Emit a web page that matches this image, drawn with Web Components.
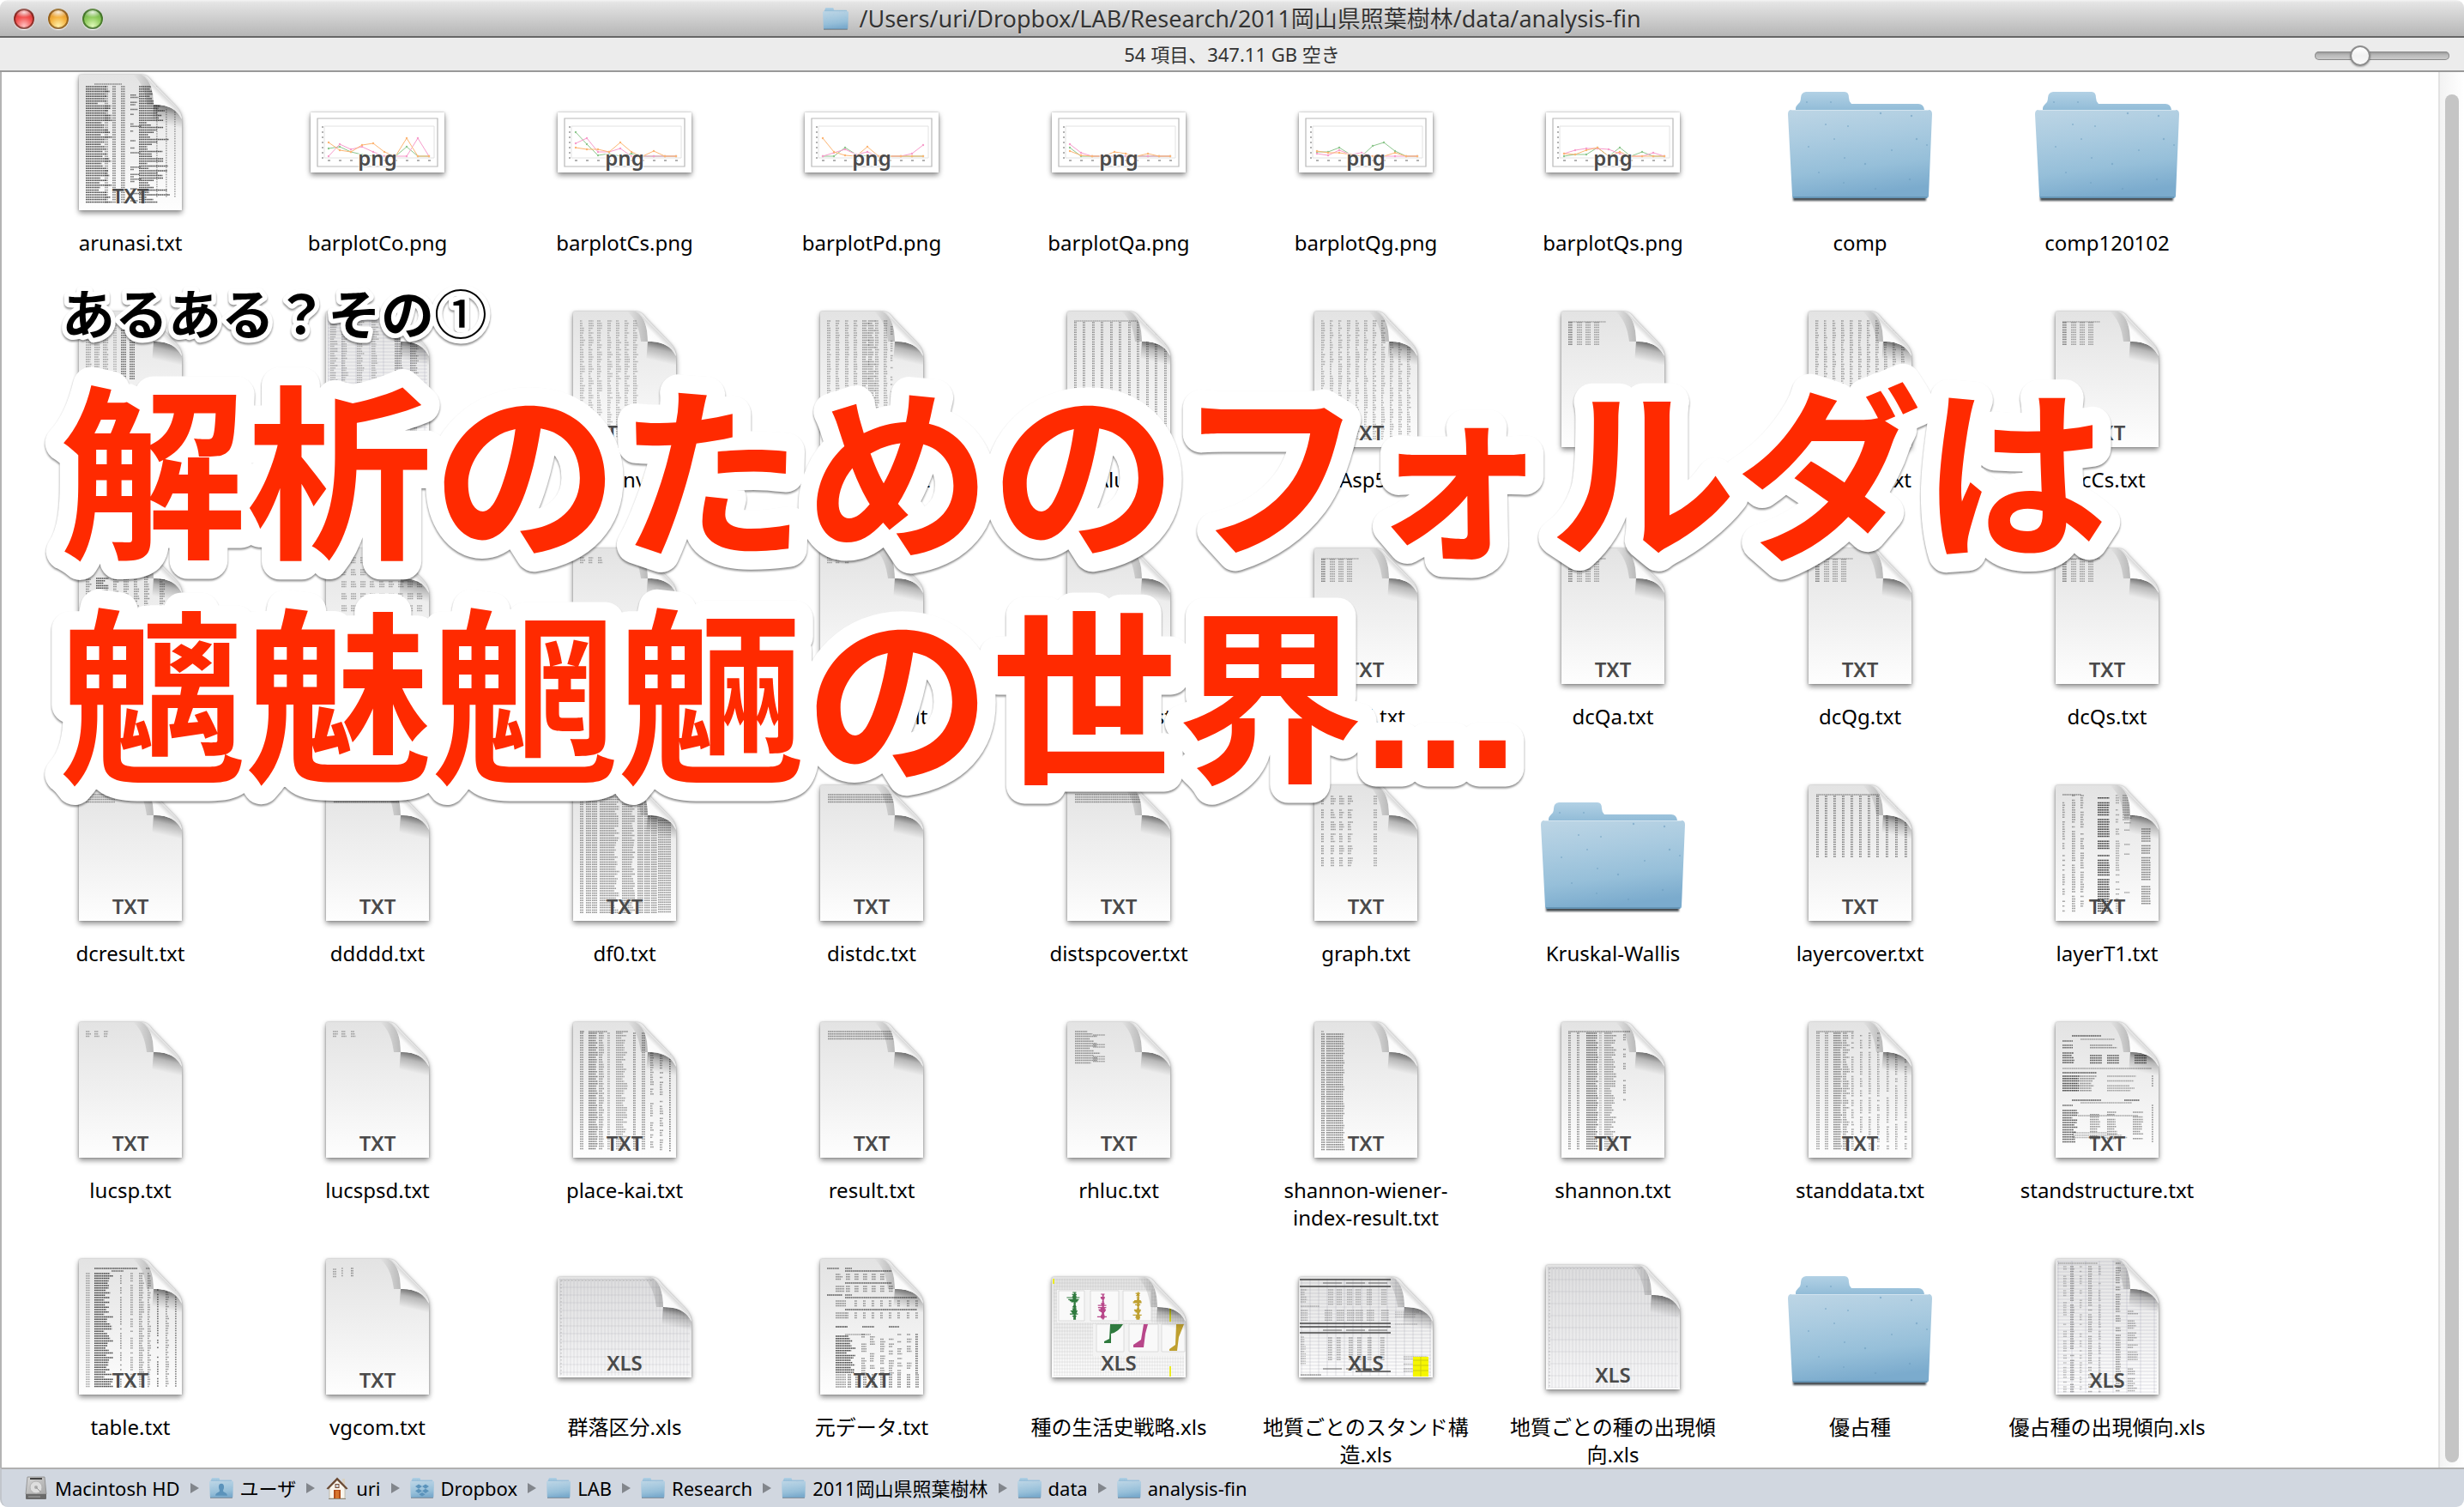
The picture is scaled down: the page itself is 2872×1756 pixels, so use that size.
<!DOCTYPE html>
<html lang="ja">
<head>
<meta charset="utf-8">
<title>analysis-fin</title>
<style>
html,body{margin:0;height:100%;background:#fff}
body{font-family:"Noto Sans","Noto Sans CJK JP",sans-serif;color:#000;overflow:hidden}
</style>
</head>
<body>
<finder-window>
  <title-bar slot="title">/Users/uri/Dropbox/LAB/Research/2011岡山県照葉樹林/data/analysis-fin</title-bar>
  <status-bar slot="status">54 項目、347.11 GB 空き</status-bar>
  <file-grid>
    <file-item art="arunasi">arunasi.txt</file-item>
    <file-item kind="png" art="Co">barplotCo.png</file-item>
    <file-item kind="png" art="Cs">barplotCs.png</file-item>
    <file-item kind="png" art="Pd">barplotPd.png</file-item>
    <file-item kind="png" art="Qa">barplotQa.png</file-item>
    <file-item kind="png" art="Qg">barplotQg.png</file-item>
    <file-item kind="png" art="Qs">barplotQs.png</file-item>
    <file-item kind="folder">comp</file-item>
    <file-item kind="folder">comp120102</file-item>

    <file-item art="half">basal.txt</file-item>
    <file-item art="ruled">CCAdata.txt</file-item>
    <file-item art="env">CCAenv.txt</file-item>
    <file-item art="env2">CCAenv2.txt</file-item>
    <file-item art="luc">CCAluc.txt</file-item>
    <file-item art="sp5">CCAsp5.txt</file-item>
    <file-item art="dc">dc.txt</file-item>
    <file-item art="cover">dccover.txt</file-item>
    <file-item art="dc">dcCs.txt</file-item>

    <file-item art="mixed">dcdata.txt</file-item>
    <file-item art="groups">dcenv.txt</file-item>
    <file-item art="tiny">dcluc.txt</file-item>
    <file-item art="tiny">dclayer2-result.txt</file-item>
    <file-item art="blank">dclucspsd-dist.txt</file-item>
    <file-item art="dc">dcPd.txt</file-item>
    <file-item art="dc">dcQa.txt</file-item>
    <file-item art="dc">dcQg.txt</file-item>
    <file-item art="dc">dcQs.txt</file-item>

    <file-item art="head1">dcresult.txt</file-item>
    <file-item art="head2">ddddd.txt</file-item>
    <file-item art="df0">df0.txt</file-item>
    <file-item art="head2">distdc.txt</file-item>
    <file-item art="head2">distspcover.txt</file-item>
    <file-item art="graph">graph.txt</file-item>
    <file-item kind="folder">Kruskal-Wallis</file-item>
    <file-item art="layercover">layercover.txt</file-item>
    <file-item art="layerT1">layerT1.txt</file-item>

    <file-item art="tiny">lucsp.txt</file-item>
    <file-item art="tiny">lucspsd.txt</file-item>
    <file-item art="place">place-kai.txt</file-item>
    <file-item art="head2">result.txt</file-item>
    <file-item art="rhluc">rhluc.txt</file-item>
    <file-item art="wiener">shannon-wiener-index-result.txt</file-item>
    <file-item art="shannon">shannon.txt</file-item>
    <file-item art="stand">standdata.txt</file-item>
    <file-item art="structure">standstructure.txt</file-item>

    <file-item art="table">table.txt</file-item>
    <file-item art="vgcom">vgcom.txt</file-item>
    <file-item kind="xls" size="156x117" art="sheet">群落区分.xls</file-item>
    <file-item art="moto">元データ.txt</file-item>
    <file-item kind="xls" size="156x117" art="charts">種の生活史戦略.xls</file-item>
    <file-item kind="xls" size="156x117" art="report">地質ごとのスタンド構造.xls</file-item>
    <file-item kind="xls" size="156x145" art="sheet">地質ごとの種の出現傾向.xls</file-item>
    <file-item kind="folder">優占種</file-item>
    <file-item kind="xls" art="trend">優占種の出現傾向.xls</file-item>
  </file-grid>
  <path-bar slot="path">
    <path-item icon="disk">Macintosh HD</path-item>
    <path-item icon="users">ユーザ</path-item>
    <path-item icon="home">uri</path-item>
    <path-item icon="dropbox">Dropbox</path-item>
    <path-item icon="folder">LAB</path-item>
    <path-item icon="folder">Research</path-item>
    <path-item icon="folder">2011岡山県照葉樹林</path-item>
    <path-item icon="folder">data</path-item>
    <path-item icon="folder" last>analysis-fin</path-item>
  </path-bar>
  <caption-overlay slot="overlay"></caption-overlay>
</finder-window>

<script>
const define=(name,html)=>customElements.define(name,class extends HTMLElement{
  connectedCallback(){
    if(this.shadowRoot)return;
    const root=this.attachShadow({mode:'open'});
    root.innerHTML=typeof html==='function'?html(this):html;
  }
});

/* ---------- folder artwork ---------- */
const folder=(extra='')=>`
<defs>
 <linearGradient id="back" x1="0" y1="0" x2="0" y2="1"><stop offset="0" stop-color="#b2d1e5"/><stop offset=".8" stop-color="#8fbad6"/><stop offset="1" stop-color="#6fa5c8"/></linearGradient>
 <linearGradient id="front" x1=".1" y1="0" x2=".3" y2="1"><stop offset="0" stop-color="#bcd5e5"/><stop offset=".35" stop-color="#aacbe0"/><stop offset=".7" stop-color="#96bfd9"/><stop offset="1" stop-color="#7babcd"/></linearGradient>
 <filter id="soft" x="-10%" y="-200%" width="120%" height="500%"><feGaussianBlur stdDeviation="1"/></filter>
</defs>
<rect x="6" y="121" width="155" height="6" fill="#333a40" fill-opacity=".9" filter="url(#soft)"/>
<path d="M9 26V19q0-2 3-5 3-2 3-7 0-6 6-7H66q5 0 5 7 0 4 3 7h78q6 0 7 7v8z" fill="url(#back)"/>
<path d="M4 21H164q4 0 4 5l-4 95q0 3-3 3H8q-3 0-3-3L0 26q0-5 4-5z" fill="url(#front)"/>
<path d="M4 21.500H164" stroke="#d3e4ef" stroke-width="1"/>
<path d="M6 123H162" stroke="#6595b6" stroke-width="2"/>
<g fill="#6f9fc1" opacity=".6"><circle cx="44" cy="38" r="1"/><circle cx="108" cy="25" r="1.200"/><circle cx="144" cy="28" r="1.200"/><circle cx="150" cy="55" r="1.200"/><circle cx="24" cy="64" r="1"/><circle cx="90" cy="84" r="1.200"/><circle cx="66" cy="77" r="1"/><circle cx="36" cy="94" r="1"/><circle cx="142" cy="102" r="1.200"/><circle cx="102" cy="113" r="1.200"/><circle cx="65" cy="106" r="1"/><circle cx="70" cy="40" r="1"/><circle cx="121" cy="68" r="1"/><circle cx="54" cy="55" r="1"/><circle cx="162" cy="62" r="1"/><circle cx="22" cy="12" r="1"/><circle cx="50" cy="12" r="1"/></g>${extra}`;

/* ---------- text thumbnails: [x, y, width, height, opacity, raggedness, fill chance] ---------- */
const cols=(xs,y,h,w,op=.45,j=0,p=1)=>xs.map(x=>[x,y,w,h,op,j,p]);
const ART={
 blank:[],
 arunasi:[[18,10,32,2,.5],[8,13,32,138,.85,.6],[30,13,4,138,.5],[39,13,4,138,.6],[49,13,5,138,.6],[60,20,14,128,.7,.8,.35],[70,13,36,138,.85,.75],[90,40,2,104,.4],[101,40,2,104,.4],[111,40,2,104,.4]],
 half:[...cols([8,18,28],10,70,7,.4,.3),...cols([40],10,70,4,.3),...cols([49,59],10,70,6,.7)],
 ruled:[...cols([5,18,36,53],6,144,9,.35,.5),...cols([80,98],20,130,10,.5,.3)],
 env:cols([8,18,28,40,50,60,70],10,138,6,.35,.6),
 env2:[...cols([8,18,29,39,64,74],10,138,5,.4,.4),...cols([49,56],10,138,9,.45,.5),[82,14,3,134,.4,.2,.5]],
 luc:[[8,10,76,2,.35],...cols([8,18,29,39,50,60,71,81,92,102,113],12,138,3,.5)],
 sp5:cols([8,18,28,38,48,58,68,78,88,98,108],10,140,5,.38,.6),
 cover:cols([8,18,28,38,48,58,68,78,88,98,108],10,140,4,.45,.4),
 dc:[[8,11,44,2,.35],[8,12,5,28,.6],...cols([18,28,38],12,28,6,.4)],
 mixed:[...cols([8,40,52,64,76,94],10,138,7,.5,.6),[20,34,18,90,.85,.7]],
 groups:[10,24,38,52,66,80,94,108].flatMap(y=>cols([18,29,40,51,62,73,84,95,106],y,9,7,.4,.3)),
 tiny:cols([8,18,29],10,8,6,.4,.3),
 vgcom:[[8,11,4,10,.4],[18,10,1,12,.4],[29,10,3,12,.5]],
 head1:[[8,10,34,10,.45]],
 head2:[[9,10,80,11,.5]],
 df0:[[8,10,4,140,.5],...cols([15,22],10,140,6,.5),[31,10,24,140,.5,.3],[57,10,16,140,.5,.3],...cols([75,83,91],10,140,7,.5),[99,40,15,110,.5]],
 graph:[12,28,42,56,70,84].flatMap(y=>[[8,y,3,11,.5],...cols([19,29,39],y,11,6,.45,.5),[69,y,4,11,.4]]),
 layercover:[[9,10,76,2,.45],...cols([9,19,29,39,49,59,69,79,90,101,112],12,72,3,.6)],
 layerT1:[[8,10,22,2,.5],[8,11,3,138,.5,.2,.8],[19,11,4,138,.5,.2,.8],[29,11,4,138,.5,.3,.8],[49,11,14,138,.95,.05,.85],[70,11,5,138,.4,.5,.8],[78,11,8,30,.4],[100,50,11,96,.6,.1,.8],[80,12,12,138,.4,.5,.1]],
 place:[[8,10,5,2,.6],[18,10,22,2,.5],[50,10,14,2,.5],[8,12,4,138,.5],[18,12,11,138,.65,.25],[30,12,6,138,.5,.3],[40,12,3,138,.4],[50,12,14,138,.45,.6],[70,12,3,138,.55],[80,12,4,138,.5],[90,24,4,126,.5,.4,.7],[101,30,4,120,.5,.3,.8],[112,34,2,116,.6]],
 rhluc:[[9,10,30,38,.5,.6],[30,14,14,34,.4,0,.6]],
 wiener:[[8,10,3,2,.4],[8,13,5,138,.6,.2],[14,13,21,138,.6,.08]],
 shannon:[[8,10,72,2,.5],...cols([8,18],12,138,3,.55),[29,12,14,138,.7,.2],[44,12,3,138,.3],[50,12,14,138,.5,.5],[72,14,3,80,.5,0,.5]],
 stand:[[9,10,44,2,.45],...cols([9,19],12,138,4,.45),[29,12,10,138,.6,.2],[40,12,8,138,.5,.6],...cols([50,60,70,80,91,101,112],12,138,3,.45,.2,.9)],
 structure:[[19,15,34,2,.8],[29,19,40,2,.4],[8,21,12,2,.7],[8,26,12,6,.7],[40,26,32,6,.5,.5],[8,35,20,14,.8,.5],...cols([40,60,92],38,11,14,.8),[8,53,104,2,.4],[8,58,40,2,.8],[8,62,20,18,.9,.1],[28,62,20,18,.5,.4],[60,62,34,18,.4,.3,.7],[112,62,2,14,.5],[19,90,34,2,.8],[80,90,18,2,.8],[29,93,60,2,.4],[8,96,12,2,.7],[8,102,20,38,.8,.5],...cols([40,60,90],104,34,12,.5,.3,.8),[26,108,70,2,.4],[20,128,80,8,.35,.5],[112,96,2,44,.5]],
 table:[[18,10,50,2,.8],[38,13,14,2,.7],[78,10,8,2,.5],[8,16,5,134,.4],[18,16,22,134,.9,.5],[48,16,2,134,.5,0,.7],[60,16,3,134,.45,0,.8],[70,16,6,134,.5,.5],[80,16,4,134,.5,.6],[91,35,2,115,.7,0,.8],[101,35,4,115,.5,.6],[112,35,2,115,.6]],
 moto:[[8,10,14,2,.7],[29,10,8,2,.7],[29,13,54,3,.75],[18,17,8,8,.5,.4],...cols([30,40,50,60,70],17,8,5,.5),[29,27,54,3,.75],[18,31,10,8,.5],...cols([30,40,50,60,70,80],31,8,5,.5),[8,41,18,2,.8],[29,41,8,2,.7],[29,44,84,3,.75],[18,48,12,8,.5],...cols([40,50,60,70,80,90,101,111],48,8,3,.5),[29,58,84,3,.8],[18,62,12,8,.5],...cols([30,40,50,60,70,80,90,101,111],62,8,3,.5),[18,78,14,2,.9],[49,78,14,2,.8],[80,78,12,2,.8],[29,87,30,2,.4],[18,89,24,44,.9,.5],...cols([48,58,70,80,90,101],87,46,6,.5,.3,.6),[111,87,3,46,.7],[18,134,12,16,.5],...cols([32,41,50,60,70,80,90,101,111],134,16,4,.6)],
 trend:[[3,4,46,2,.35],[9,8,4,148,.3,.2,.8],[17,8,5,148,.45,.2,.85],[28,8,3,148,.3,.2,.7],[38,8,5,148,.4,.2,.8],[50,8,3,148,.3,.2,.8],[70,4,6,152,.5,.2,.85],[84,60,12,96,.4,.5,.7],[60,8,50,148,.2,.4,.1]]
};
const rng=s=>()=>(s=(Math.imul(s,1664525)+1013904223)>>>0)/4294967296;
const textBlocks=(spec,seed)=>{
  const rand=rng(seed*7919+17);
  return spec.map(([x,y,w,h,op=.5,j=0,p=1])=>{
    let d='';
    for(let t=y+1;t<=y+h;t+=2.8){
      if(rand()>p)continue;
      const len=Math.max(2,w*(1-j*rand()));
      d+=`M${x} ${t.toFixed(1)}h${len.toFixed(1)}`;
    }
    return `<path d="${d}" stroke="#333" stroke-opacity="${op}" stroke-width="1.500" stroke-dasharray="1.700 .5"/>`;
  }).join('');
};
const gridLines=(w,h,sx,sy,c,op)=>{
  let d='';
  for(let x=3;x<w;x+=sx)d+=`M${x} 2V${h-2}`;
  for(let y=3;y<h;y+=sy)d+=`M2 ${y}H${w-2}`;
  return `<path d="${d}" stroke="${c}" stroke-opacity="${op}" stroke-width=".8"/>`;
};
const zigzag=(x,y0,y1,amp,c,seed)=>{
  const rand=rng(seed*101+3);let d='';
  for(let y=y0;y<y1;y+=1.2){const a=rand()*rand()*amp;d+=`M${(x-a*.7).toFixed(1)} ${y.toFixed(1)}H${(x+1.5+a*.4).toFixed(1)}`}
  return `<path d="${d}" stroke="${c}" stroke-width="1.200"/>`;
};
const sheets={
 sheet:(w,h)=>`<path d="M2 2H${w-2}V${h-2}H2z" fill="#777788" fill-opacity=".05"/>`+gridLines(w,h,4,h>130?14:9,'#8a8a96',.22)+`<path d="M4 4V${h-3}M4 4H${w-44}" stroke="#777" stroke-opacity=".3" stroke-width="1.500" stroke-dasharray="1.500 2.500"/>`,
 charts:(w,h)=>gridLines(w,h,3,4,'#8a8a94',.2)
  +`<path d="M6 15H116V53H6zM48 55H154V92H48z" fill="#f3f3f3"/><g fill="#f9f9f9" stroke="#d4d4d4" stroke-width=".8"><path d="M8 16H38V51H8zM45 16H78V51H45zM83 16H116V51H83zM52 55H84V87H52zM90 55H124V87H90zM128 55H155V87H128z"/></g>`
  +zigzag(26,18,50,13,'#2f7a3e',1)+zigzag(59,20,50,10,'#b8478a',2)+zigzag(100,18,50,10,'#bfa030',3)
  +'<path d="M68 55H83Q78 64 69 66V77H61V75L67 72z" fill="#2f7a3e"/><path d="M107 55H112L109 66 107 82H95V79L104 73z" fill="#b8478a"/><path d="M145 55H154L148 70 146 86H137V84L144 79z" fill="#bfa030"/>'
  +'<path d="M1 2H3V8H1zM137 35H139V52H137zM137 104H139V116H137z" fill="#ecec20"/>',
 report:(w,h)=>gridLines(w,h,10,4,'#8a8a9a',.3)
  +'<path d="M1 3H107M1 11H107M1 54H107M1 58H107M1 65H107M66 110H107" stroke="#444" stroke-width="1.500"/><path d="M28 7H50M55 7H77M81 7H103M28 62H50M55 62H77M81 62H103M28 107H50M55 107H77" stroke="#666" stroke-width="1"/>'
  +textBlocks([[2,14,8,16,.3,.4],...cols([34,44,56,66,79,96],14,18,6,.3),[2,33,22,2,.3],[2,38,8,14,.3],...cols([30,44,56,66,79,96],38,13,9,.33),[2,69,7,32,.3,.4],...cols([34,44,58,68,80,95],70,28,5,.4),[112,40,30,18,.2,.3,.6],[122,92,28,20,.3,.3,.6],[2,113,24,2,.5]],5)
  +'<path d="M133 93H151V116H133z" fill="#f6f600"/><path d="M133 97H151M133 103H151M133 109H151M142 93V116" stroke="#cbcb10" stroke-width="1"/>'
};
let serial=0;
const page=(kind,art,w,h)=>{
  const body=sheets[art]?sheets[art](w,h):(art==='ruled'||art==='trend'?gridLines(w,h,16,4,'#8888a0',.3):'')+textBlocks(ART[art]||[],++serial);
  const f=w-47;
  const outline=`M2 0H${f}C${f+6} 0 ${f+9} 4 ${f+12} 8L${f+40} 37Q${w} 44 ${w} 54V${h}H0V2Q0 0 2 0z`;
  return `<svg class="page" width="${w}" height="${h}" viewBox="0 0 ${w} ${h}" fill="none" aria-hidden="true">
<defs>
 <linearGradient id="paper" x1="0" y1="0" x2="0" y2="1"><stop offset="0" stop-color="#e3e3e3"/><stop offset=".55" stop-color="#f1f1f1"/><stop offset="1" stop-color="#fefefe"/></linearGradient>
 <linearGradient id="curl" gradientUnits="userSpaceOnUse" x1="${f+14}" y1="35" x2="${f+27}" y2="22"><stop offset="0" stop-color="#fff"/><stop offset=".6" stop-color="#fafafa"/><stop offset=".85" stop-color="#dcdcdc"/><stop offset="1" stop-color="#f4f4f4"/></linearGradient>
 <linearGradient id="shade" gradientUnits="userSpaceOnUse" x1="${f+30}" y1="36" x2="${f+25}" y2="58"><stop offset="0" stop-color="#000" stop-opacity=".55"/><stop offset=".4" stop-color="#000" stop-opacity=".22"/><stop offset="1" stop-color="#000" stop-opacity="0"/></linearGradient>
 <linearGradient id="bend" x1="0" y1="0" x2="1" y2="0"><stop offset="0" stop-color="#000" stop-opacity="0"/><stop offset="1" stop-color="#000" stop-opacity=".2"/></linearGradient>
 <clipPath id="cut"><path d="${outline}"/></clipPath>
</defs>
<g class="lift"><path d="${outline}" fill="url(#paper)"/></g>
<g clip-path="url(#cut)">${body}
<path d="M${f-10} 0H${f}C${f+11} 6 ${f+14} 20 ${f+14} 35H${f+6}C${f+4} 20 ${f} 8 ${f-10} 0z" fill="url(#bend)"/>
<path d="M${f+14} 35C${f+28} 35 ${f+40} 38 ${w} 52V68Q${f+36} 56 ${f+12} 60z" fill="url(#shade)"/></g>
<path d="M${f} 0C${f+11} 6 ${f+14} 20 ${f+14} 35C${f+28} 35 ${f+40} 38 ${w} 52Q${f+46} 43 ${f+40} 37L${f+12} 8C${f+9} 4 ${f+6} 0 ${f} 0z" fill="url(#curl)"/>
<text x="${w/2}" y="${h-8}">${kind.toUpperCase()}</text></svg>`;
};

/* ---------- chart thumbnails: three series, ten samples each ---------- */
const SERIES={
 Co:[[42,40,46,49,51,51,51,40,51,51],[51,37,43,40,46,51,51,51,30,51],[35,44,46,38,36,46,51,30,51,51]],
 Cs:[[23,37,50,48,51,48,51,51,51,51],[36,30,46,46,42,51,51,51,51,51],[41,43,43,46,35,46,51,45,51,51]],
 Pd:[[51,51,41,49,51,51,51,51,51,51],[51,47,43,49,46,51,51,51,48,38],[30,46,50,51,40,51,51,51,51,51]],
 Qa:[[41,51,51,51,51,51,51,51,51,51],[37,47,51,51,51,51,51,51,51,51],[45,50,51,51,46,48,51,48,51,51]],
 Qg:[[46,46,41,49,51,39,35,45,51,51],[48,50,44,49,47,51,51,51,51,51],[45,47,47,49,51,51,51,47,51,51]],
 Qs:[[51,49,49,41,51,41,51,46,51,51],[48,44,42,42,43,48,51,51,47,51],[48,49,44,41,51,46,51,51,51,51]]
};
const chart=art=>{
  const line=(ys,c)=>{const p=ys.map((y,i)=>`${21+i*13},${y}`);
    return `<polyline points="${p.join(' ')}" stroke="${c}" stroke-width="1"/>`+ys.map((y,i)=>`<circle cx="${21+i*13}" cy="${y}" r="1.200" fill="${c}"/>`).join('')};
  const [g,p,o]=SERIES[art];let ticks='';
  for(let i=0;i<10;i++)ticks+=`M${20+i*13} 56h3`;
  for(let i=0;i<7;i++)ticks+=`M13 ${17+i*6}h2`;
  return `<svg class="page" width="156" height="70" viewBox="0 0 156 70" fill="none" aria-hidden="true"><g class="lift"><path d="M0 0H156V70H0z" fill="#fff"/></g>
<path d="M8 7H148V63H8z" stroke="#b8b8b8" stroke-width="1.200"/><path d="M16 16H144V53H16z" stroke="#e2e2e2"/><path d="${ticks}" stroke="#999" stroke-width="1.500"/>
${line(g,'#8cc68c')}${line(p,'#f79bcb')}${line(o,'#fcb573')}
<text x="78" y="62" class="halo">png</text></svg>`;
};

define('file-item',el=>{
  const kind=el.getAttribute('kind')||'txt',art=el.getAttribute('art');
  const [w,h]=(el.getAttribute('size')||'120x158').split('x').map(Number);
  const pic=kind==='folder'?`<svg width="168" height="142" viewBox="0 -12 168 142" aria-hidden="true">${folder()}</svg>`
    :kind==='png'?chart(art):page(kind,art,w,h);
  return `<style>
:host{display:flex;flex-direction:column;align-items:center;gap:19px;box-sizing:border-box}
.icon{height:164px;display:flex;align-items:center;justify-content:center}
svg{display:block;overflow:visible}
.lift{filter:drop-shadow(0 3px 3px rgba(0,0,0,.38)) drop-shadow(0 0 1px rgba(0,0,0,.3))}
text{font:600 24px "Noto Sans",sans-serif;fill:#4a4a4a;text-anchor:middle}
.halo{paint-order:stroke;stroke:rgba(255,255,255,.6);stroke-width:3px}
.name{width:248px;text-align:center;font-size:24px;line-height:32px}
</style><div class="icon">${pic}</div><div class="name"><slot></slot></div>`;
});

define('file-grid',`<style>
:host{display:flex;flex:1;min-height:0;background:#fff;border-left:2px solid #b4b4b4;overflow:hidden}
.files{flex:1;display:grid;grid-template-columns:repeat(auto-fill,288px);grid-auto-rows:276px;padding-left:6px;overflow:hidden}
.scroll{flex:none;width:28px;box-sizing:content-box;border-left:2px solid #e2e2e2;background:linear-gradient(90deg,#f3f3f3,#fff);padding:26px 0 6px;display:flex;justify-content:center}
.thumb{width:16px;border-radius:8px;background:#c5c5c5}
</style><div class="files"><slot></slot></div><div class="scroll"><div class="thumb"></div></div>`);

define('title-bar',`<style>
:host{display:grid;grid-template-columns:1fr auto 1fr;align-items:center;height:42px;background:linear-gradient(#f4f4f4,#e4e4e4 3px,#b6b6b6);border-bottom:2px solid #666;border-radius:9px 9px 0 0}
.lights{display:flex;gap:16px;padding:2px 0 0 16px}
button{width:24px;height:24px;padding:0;border-radius:50%;border:2px solid rgba(70,20,10,.55);box-shadow:0 1px 1px #fff}
.c{background:radial-gradient(ellipse 55% 30% at 50% 12%,#ffffffd0,#fff0),radial-gradient(circle at 50% 90%,#ffc0c0,#f2504e 50%,#c22c2c)}
.m{border-color:rgba(110,65,10,.65);background:radial-gradient(ellipse 55% 30% at 50% 12%,#ffffffd0,#fff0),radial-gradient(circle at 50% 90%,#fff0a8,#f4b13e 50%,#cf8222)}
.z{border-color:rgba(40,85,20,.65);background:radial-gradient(ellipse 55% 30% at 50% 12%,#ffffffd0,#fff0),radial-gradient(circle at 50% 90%,#def8b8,#8ecb5c 50%,#5a9a3c)}
.title{display:flex;align-items:center;gap:12px;padding-top:2px;font-size:27px;line-height:36px;color:#333;text-shadow:0 1px 0 rgba(255,255,255,.5)}
svg{display:block}
</style><div class="lights"><button class="c" aria-label="閉じる"></button><button class="m" aria-label="しまう"></button><button class="z" aria-label="拡大"></button></div>
<div class="title"><svg width="30" height="26" viewBox="0 0 168 130" preserveAspectRatio="none" aria-hidden="true">${folder()}</svg><span><slot></slot></span></div>`);

define('status-bar',`<style>
:host{display:grid;grid-template-columns:1fr auto 1fr;align-items:center;height:38px;background:#ececec;border-bottom:2px solid #999;font-size:22px;line-height:30px;color:#333}
.text{grid-column:2}
.size{justify-self:end;display:flex;padding-right:17px}
input{appearance:none;-webkit-appearance:none;width:157px;height:26px;margin:3px 0 0;background:none}
input::-webkit-slider-runnable-track{height:10px;border-radius:5px;background:linear-gradient(#8e8e8e,#b8b8b8 40%,#cfcfcf);box-shadow:inset 0 0 0 1px #8a8a8a}
input::-webkit-slider-thumb{-webkit-appearance:none;width:24px;height:24px;margin-top:-7px;border-radius:50%;background:linear-gradient(#fff,#f1f1f1 50%,#fbfbfb);border:2px solid #8c8c8c;box-sizing:border-box;box-shadow:0 1px 2px rgba(0,0,0,.3)}
</style><span class="text"><slot></slot></span><label class="size"><input type="range" min="0" max="100" value="31" aria-label="アイコンサイズ"></label>`);

const small=extra=>`<svg width="28" height="24" viewBox="0 0 168 130" preserveAspectRatio="none" aria-hidden="true">${folder(extra)}</svg>`;
const ICONS={
 folder:small(''),
 users:small('<path d="M84 36c14 0 20 12 18 26-1 10-6 14-6 20 0 8 28 10 30 30H42c2-20 30-22 30-30 0-6-5-10-6-20-2-14 4-26 18-26z" fill="#5b93bb"/>'),
 dropbox:small('<path d="M60 40l24 14-24 15-24-15zM108 40l24 14-24 15-24-15zM60 69l24 14-24 15-24-15zM108 69l24 14-24 15-24-15zM84 92l22 12-22 12-22-12z" fill="#5b93bb"/>'),
 home:`<svg width="28" height="28" viewBox="0 0 28 28" aria-hidden="true"><path d="M5 13L14 4l9 9v13H5z" fill="#f8f4ec" stroke="#b9b09c" stroke-width=".8"/><path d="M20 3h3v8l-3-3z" fill="#d9d0c0"/><path d="M1.500 14.500L14 1.500l12.500 13-2 1L14 5 3.500 15.500z" fill="#6b4a33"/><path d="M11.500 9h5v5h-5z" fill="#7c4a30"/><path d="M12.500 10h3v3h-3z" fill="#cfd8e0"/><path d="M10 16h8v10h-8z" fill="#b34d18"/><path d="M12 17h4v9h-4z" fill="#d8742c"/><path d="M4 26.500h20" stroke="#8d8577"/></svg>`,
 disk:`<svg width="28" height="28" viewBox="0 0 28 28" aria-hidden="true"><defs><linearGradient id="m" x1="0" y1="0" x2="1" y2="1"><stop offset="0" stop-color="#d8d8d8"/><stop offset="1" stop-color="#a6a6a6"/></linearGradient></defs><path d="M4 1h20l2 20H2z" fill="url(#m)" stroke="#888" stroke-width=".8"/><path d="M7 2h14v2H7z" fill="#444"/><circle cx="14" cy="13" r="7" fill="#dedede" stroke="#b4b4b4"/><circle cx="14" cy="13" r="2" fill="#aaa"/><path d="M14 13l6 6" stroke="#999"/><path d="M2 21h24v5q0 1-1 1H3q-1 0-1-1z" fill="#6b6b6b"/><path d="M5 24h14" stroke="#a8a8a8"/></svg>`
};
define('path-item',el=>`<style>
:host{display:flex;align-items:center;gap:12px}
a{display:flex;align-items:center;gap:8px;color:#000;text-decoration:none}
svg{display:block}
.icon{display:flex;align-items:center;height:30px}
</style><a href="#"><span class="icon">${ICONS[el.getAttribute('icon')]}</span><span><slot></slot></span></a>
${el.hasAttribute('last')?'':'<svg width="10" height="12" viewBox="0 0 10 12" aria-hidden="true"><path d="M0 0L10 6 0 12z" fill="#82868c"/></svg>'}`);

define('path-bar',`<style>
:host{display:flex;align-items:center;gap:12px;height:44px;padding-left:26px;background:#d1d7e0;border-top:2px solid #b0b0b0;border-left:2px solid #c2c6cc;border-radius:0 0 9px 9px;font-size:22px;line-height:30px;white-space:nowrap;box-sizing:content-box}
</style><slot></slot>`);

define('caption-overlay',`<style>
:host{position:absolute;inset:0;pointer-events:none}
svg{display:block;width:100%;height:100%;overflow:visible}
text{font-family:"Noto Sans CJK JP",sans-serif;font-weight:700;paint-order:stroke;stroke:#fff;stroke-linejoin:round}
g{filter:drop-shadow(0 2px 1px rgba(0,0,0,.45))}
.lead{font-size:62px;stroke-width:11px;fill:#000}
.ring{font-weight:500}
.head{font-size:217px;stroke-width:43px;fill:#ff2a00}
.dots{font-family:"Liberation Sans",sans-serif}
</style><svg role="img" aria-label="caption">
<g><text class="lead" x="72" y="390">あるある？その<tspan class="ring">①</tspan></text></g>
<g><text class="head" x="70" y="634">解析のためのフォルダは</text><text class="head" x="70" y="895">魑魅魍魎の世界<tspan class="dots">...</tspan></text></g></svg>`);

define('finder-window',`<style>
:host{position:relative;display:flex;flex-direction:column;height:100vh;overflow:hidden}
</style><slot name="title"></slot><slot name="status"></slot><slot></slot><slot name="path"></slot><slot name="overlay"></slot>`);
</script>
</body>
</html>
